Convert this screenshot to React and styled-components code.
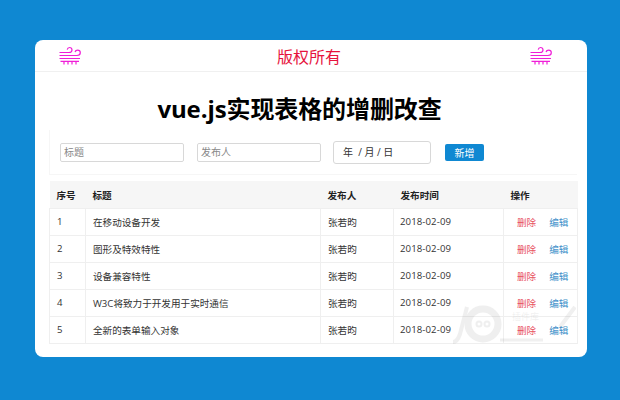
import React from "react"
import styled, { createGlobalStyle } from "styled-components"

const GlobalStyle = createGlobalStyle`
  html, body {
    margin: 0;
    height: 100%;
    background: #0f88d2;
    font-family: "Open Sans", "Noto Sans CJK SC", sans-serif;
  }
`

const Page = styled.div`
  width: 620px;
  height: 400px;
  padding: 40px 33px 43px 35px;
  box-sizing: border-box;
  overflow: hidden;
`

const Card = styled.div`
  position: relative;
  height: 317px;
  background: #fff;
  border-radius: 8px;
  overflow: hidden;
`

const TopBar = styled.div`
  display: flex;
  align-items: center;
  justify-content: space-between;
  height: 31px;
  padding: 0 35px 0 24px;
  border-bottom: 1px solid #f0f0f0;
`

const Copyright = styled.span`
  margin-left: 7px;
  color: #e6133c;
  font-size: 16px;
  font-family: "Noto Sans CJK SC", sans-serif;
`

const Title = styled.h1`
  margin: 0;
  padding: 18px 23px 0 0;
  height: 37px;
  line-height: 37px;
  text-align: center;
  font-size: 24px;
  font-weight: 700;
  letter-spacing: -0.1px;
  color: #000;
`

const Form = styled.form`
  display: flex;
  align-items: center;
  margin: 3px 10px 0 14px;
  height: 44px;
  padding: 0 0 0 10px;
  border: 1px solid #f6f6f6;
  border-width: 0 0 1px 1px;
`

const TextInput = styled.input`
  width: 124px;
  height: 19px;
  margin-right: ${props => props.$gap}px;
  padding: 0 3px;
  box-sizing: border-box;
  border: 1px solid #d8d8d8;
  border-radius: 2px;
  font: 10px "Open Sans", "Noto Sans CJK SC", sans-serif;
  &::placeholder {
    color: #888;
  }
`

const DateBox = styled.div`
  width: 98px;
  height: 23px;
  margin-right: 14px;
  padding-left: 9px;
  box-sizing: border-box;
  border: 1px solid #d8d8d8;
  border-radius: 3px;
  line-height: 21px;
  font-size: 10px;
  color: #333;
  white-space: pre;
`

const AddButton = styled.button`
  width: 39px;
  height: 17px;
  padding: 0;
  border: 0;
  border-radius: 2px;
  background: #0f88d2;
  color: #fff;
  font: 10px "Open Sans", "Noto Sans CJK SC", sans-serif;
`

const Table = styled.table`
  width: 528px;
  margin: 6px 0 0 14px;
  border-collapse: collapse;
  table-layout: fixed;
  font-size: 9.6px;
  color: #333;
`

const Th = styled.th`
  width: ${props => props.$w}px;
  height: 27px;
  padding: 1px 0 0 7px;
  box-sizing: border-box;
  background: #f6f6f6;
  text-align: left;
  font-weight: 700;
  font-size: 9.6px;
  color: #222;
`

const Td = styled.td`
  height: 27px;
  padding: 0 0 0 7px;
  box-sizing: border-box;
  border: 1px solid #efefef;
  white-space: nowrap;
`

const DateText = styled.span`
  margin-left: -1px;
  letter-spacing: 0.1px;
`

const Action = styled.span`
  margin-left: ${props => props.$left}px;
  color: ${props => props.$color};
`

const Watermark = styled.svg`
  position: absolute;
  right: 11px;
  bottom: 11px;
  pointer-events: none;
`

const WatermarkText = styled.text`
  font-size: 9px;
  font-family: "Noto Sans CJK SC", sans-serif;
  fill: #000;
  stroke: none;
`

const WindIcon = () => (
  <svg width="22" height="19" viewBox="0 0 22 19" fill="none" stroke="#f01fd8" strokeWidth="1.2">
    <path d="M0.5 6.5H10C11.9 6.5 13 5.4 13 4C13 2.6 12 1.5 10.6 1.5C9.2 1.5 8.4 2.4 8.2 3.6" />
    <path d="M0.5 9.5H18C20 9.5 21.3 8.3 21.3 6.8C21.3 5.2 20.1 4.1 18.6 4.1C17.2 4.1 16.3 5 16 6.1" />
    <path d="M0.5 12.5H21" />
    <path d="M1.5 15.3H20" />
    <path d="M5 15V18.5M9 15V18.5M13 15V18.5M17 15V18.5" />
  </svg>
)

const rows = [
  ["1", "在移动设备开发"],
  ["2", "图形及特效特性"],
  ["3", "设备兼容特性"],
  ["4", "W3C将致力于开发用于实时通信"],
  ["5", "全新的表单输入对象"],
]

export default function App() {
  return (
    <Page>
      <GlobalStyle />
      <Card>
        <TopBar>
          <WindIcon />
          <Copyright>版权所有</Copyright>
          <WindIcon />
        </TopBar>
        <Title>vue.js实现表格的增删改查</Title>
        <Form>
          <TextInput placeholder="标题" $gap={13} />
          <TextInput placeholder="发布人" $gap={12} />
          <DateBox>年  / 月 / 日</DateBox>
          <AddButton type="button">新增</AddButton>
        </Form>
        <Table>
          <thead>
            <tr>
              <Th $w={36}>序号</Th>
              <Th $w={235}>标题</Th>
              <Th $w={73}>发布人</Th>
              <Th $w={110}>发布时间</Th>
              <Th $w={74}>操作</Th>
            </tr>
          </thead>
          <tbody>
            {rows.map(([id, title]) => (
              <tr key={id}>
                <Td>{id}</Td>
                <Td>{title}</Td>
                <Td>张若昀</Td>
                <Td><DateText>2018-02-09</DateText></Td>
                <Td>
                  <Action $left={6} $color="#e8505f">删除</Action>
                  <Action $left={13} $color="#3d8fc9">编辑</Action>
                </Td>
              </tr>
            ))}
          </tbody>
        </Table>
        <Watermark width="125" height="48" viewBox="0 0 125 48" fill="none" stroke="#000" opacity="0.06">
          <circle cx="32" cy="26" r="15" strokeWidth="7" />
          <circle cx="28" cy="26" r="2.5" strokeWidth="2" />
          <circle cx="36" cy="26" r="2.5" strokeWidth="2" />
          <path d="M16 9L9 36C7 42 4 44 2 44" strokeWidth="4" />
          <path d="M49 42H92" strokeWidth="3" />
          <path d="M109 29L124 9" strokeWidth="4" />
          <WatermarkText x="61" y="22">插件库</WatermarkText>
        </Watermark>
      </Card>
    </Page>
  )
}
